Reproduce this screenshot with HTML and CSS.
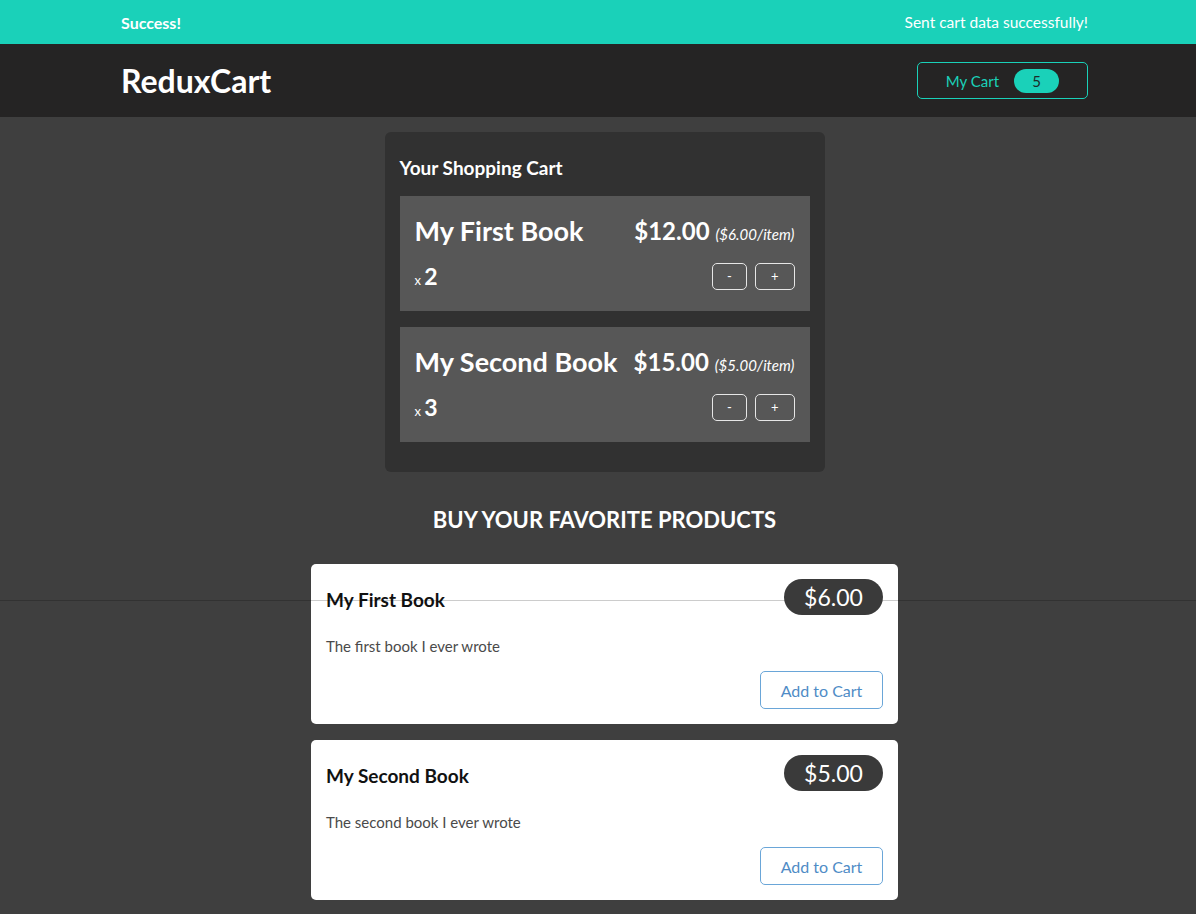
FILE: index.html
```html
<!DOCTYPE html>
<html lang="en">
<head>
<meta charset="utf-8">
<title>ReduxCart</title>
<link rel="stylesheet" href="styles.css">
</head>
<body>
<div class="rule-line"></div>
<section class="notification">
  <h2>Success!</h2>
  <p>Sent cart data successfully!</p>
</section>
<header class="header">
  <h1>ReduxCart</h1>
  <nav>
    <button class="cart-button"><span>My Cart</span><span class="badge">5</span></button>
  </nav>
</header>
<div class="page">
  <main class="main">
    <section class="cart">
      <h2>Your Shopping Cart</h2>
      <ul class="cart-list">
        <li class="item">
          <header class="item-head">
            <h3>My First Book</h3>
            <div class="price">$12.00 <span>($6.00/item)</span></div>
          </header>
          <div class="details">
            <div class="quantity">x <span>2</span></div>
            <div class="actions">
              <button class="qty-btn">-</button>
              <button class="qty-btn">+</button>
            </div>
          </div>
        </li>
        <li class="item">
          <header class="item-head">
            <h3>My Second Book</h3>
            <div class="price">$15.00 <span>($5.00/item)</span></div>
          </header>
          <div class="details">
            <div class="quantity">x <span>3</span></div>
            <div class="actions">
              <button class="qty-btn">-</button>
              <button class="qty-btn">+</button>
            </div>
          </div>
        </li>
      </ul>
    </section>
    <section class="products">
      <h2>Buy your favorite products</h2>
      <ul class="product-list">
        <li class="product">
          <header class="product-head">
            <h3>My First Book</h3>
            <div class="product-price">$6.00</div>
          </header>
          <p>The first book I ever wrote</p>
          <div class="product-actions"><button class="add-btn">Add to Cart</button></div>
        </li>
        <li class="product">
          <header class="product-head">
            <h3>My Second Book</h3>
            <div class="product-price">$5.00</div>
          </header>
          <p>The second book I ever wrote</p>
          <div class="product-actions"><button class="add-btn">Add to Cart</button></div>
        </li>
      </ul>
    </section>
  </main>
</div>
</body>
</html>
```
FILE: styles.css
```css
* { box-sizing: border-box; }

html { font-family: "Lato", "Noto Sans", sans-serif; }

body {
  margin: 0;
  background-color: #3f3f3f;
  position: relative;
}

.rule-line {
  position: absolute;
  top: 600px;
  left: 0;
  width: 100%;
  height: 1px;
  background: rgba(0, 0, 0, 0.2);
}

.notification {
  height: 44px;
  background-color: #1ad1b9;
  color: #fff;
  display: flex;
  align-items: center;
  justify-content: space-between;
  padding: 0 108px 0 121px;
}
.notification h2 { margin: 0; font-size: 16px; font-weight: 700; }
.notification p { margin: 0; font-size: 15.5px; }

.header {
  height: 73px;
  background-color: #252424;
  display: flex;
  align-items: center;
  justify-content: space-between;
  padding: 0 108px 0 121px;
}
.header h1 { margin: 0; color: #fff; font-size: 32px; font-weight: 700; }

.cart-button {
  width: 171px;
  height: 37px;
  display: flex;
  align-items: center;
  justify-content: center;
  gap: 15px;
  background: transparent;
  border: 1px solid #1ad1b9;
  border-radius: 5px;
  color: #1ad1b9;
  font: inherit;
  font-size: 15px;
}
.badge {
  background-color: #1ad1b9;
  color: #1d2b29;
  border-radius: 30px;
  width: 45px;
  height: 24px;
  display: flex;
  align-items: center;
  justify-content: center;
  font-size: 15px;
}

.page { padding-left: 13px; }

.main {
  width: 587px;
  margin: 15px auto 0;
}

.cart {
  width: 440px;
  margin: 0 auto;
  background-color: #313131;
  border-radius: 6px;
  padding: 15px;
  color: #fff;
}
.cart h2 {
  margin: 8px 0 0;
  font-size: 19px;
  line-height: 26px;
  font-weight: 700;
}
.cart-list {
  list-style: none;
  margin: 15px 0 15px;
  padding: 0;
  display: flex;
  flex-direction: column;
  gap: 16px;
}
.item {
  background-color: #575757;
  padding: 15px;
  height: 115px;
}
.item-head {
  height: 38px;
  display: flex;
  align-items: center;
  justify-content: space-between;
  margin-bottom: 7px;
}
.item-head h3 { margin: 0; font-size: 27px; font-weight: 700; }
.price { font-size: 24px; font-weight: 700; }
.price span { font-size: 15px; font-weight: 400; font-style: italic; }

.details {
  height: 40px;
  display: flex;
  align-items: center;
  justify-content: space-between;
}
.quantity { font-size: 13px; }
.quantity span { font-size: 23px; font-weight: 700; }
.actions { display: flex; gap: 8px; }
.qty-btn {
  height: 27px;
  padding: 0 14px;
  background: transparent;
  border: 1px solid #e6e6e6;
  border-radius: 5px;
  color: #fff;
  font: inherit;
  font-size: 13px;
}
.qty-btn + .qty-btn { padding: 0 15px; }

.products h2 {
  margin: 33px 0 29px;
  text-align: center;
  text-transform: uppercase;
  color: #fff;
  font-size: 22px;
  line-height: 30px;
  font-weight: 700;
}
.product-list {
  list-style: none;
  margin: 0;
  padding: 0;
  display: flex;
  flex-direction: column;
  gap: 16px;
}
.product {
  background: #fff;
  border-radius: 5px;
  padding: 15px;
}
.product-head {
  display: flex;
  align-items: center;
  justify-content: space-between;
}
.product-head h3 { margin: 4px 0 0; font-size: 19px; font-weight: 700; color: #111; }
.product-price {
  position: relative;
  background-color: #3a3a3a;
  color: #fff;
  border-radius: 30px;
  width: 99px;
  height: 36px;
  display: flex;
  align-items: center;
  justify-content: center;
  font-size: 23px;
}
.product p {
  margin: 21px 0 0;
  font-size: 15px;
  line-height: 20px;
  color: #4a4a4a;
}
.product-actions {
  display: flex;
  justify-content: flex-end;
  margin-top: 15px;
}
.add-btn {
  width: 123px;
  height: 38px;
  background: #fff;
  border: 1px solid #6aa6d8;
  border-radius: 5px;
  color: #4f8cc6;
  font: inherit;
  font-size: 16px;
}
```
